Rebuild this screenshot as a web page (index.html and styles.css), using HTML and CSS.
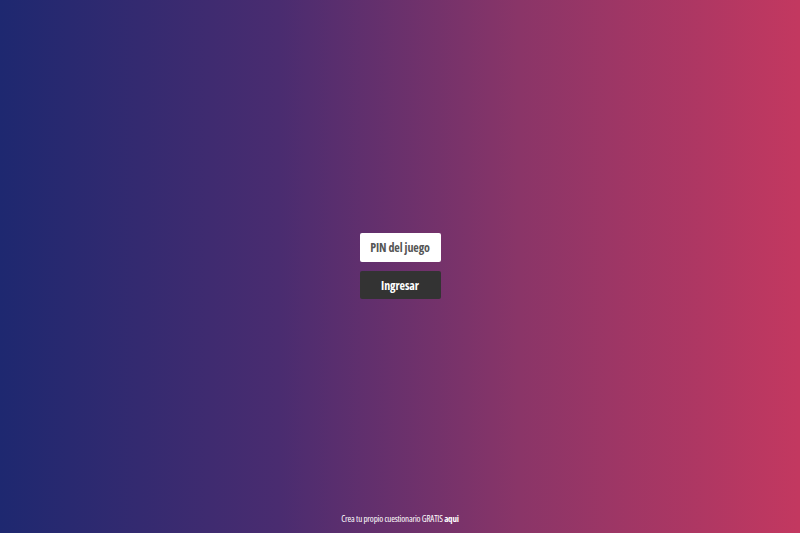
FILE: index.html
```html
<!DOCTYPE html>
<html lang="es">
<head>
<meta charset="utf-8">
<link rel="stylesheet" href="styles.css">
</head>
<body>
<main class="page">
  <div class="center">
    <form class="join">
      <input class="pin" type="text" placeholder="PIN del juego">
      <button class="go" type="button">Ingresar</button>
    </form>
  </div>
  <footer class="foot">Crea tu propio cuestionario GRATIS <b>aqui</b></footer>
</main>
</body>
</html>
```
FILE: styles.css
```css
html, body { margin: 0; padding: 0; height: 100%; }
body {
  background: linear-gradient(to right, #1e2870 0%, #4a2c70 35%, #8a3568 65%, #c33860 100%);
  font-family: "Open Sans", "Liberation Sans", sans-serif;
}
.page { height: 533px; display: flex; flex-direction: column; }
.center { flex: 1; display: flex; align-items: center; justify-content: center; padding-top: 29px; }
.join { display: flex; flex-direction: column; gap: 9px; width: 81px; }
.pin {
  box-sizing: border-box; width: 81px; height: 29px; border: 0; border-radius: 2px;
  background: #fff; text-align: center; font-family: inherit; font-weight: 700;
  font-size: 12px; font-stretch: condensed; color: #555; padding: 0; letter-spacing: -0.1px;
}
.pin::placeholder { color: #555; opacity: 1; }
.go {
  box-sizing: border-box; width: 81px; height: 28px; border: 0; border-radius: 2px;
  background: #333; color: #fff; font-family: inherit; font-weight: 700; font-size: 12px;
  font-stretch: condensed; padding: 0; letter-spacing: -0.1px;
}
.foot {
  height: 30px; text-align: center; color: #fff; font-size: 9px; font-stretch: condensed;
  letter-spacing: -0.2px; line-height: 31px;
}
```
